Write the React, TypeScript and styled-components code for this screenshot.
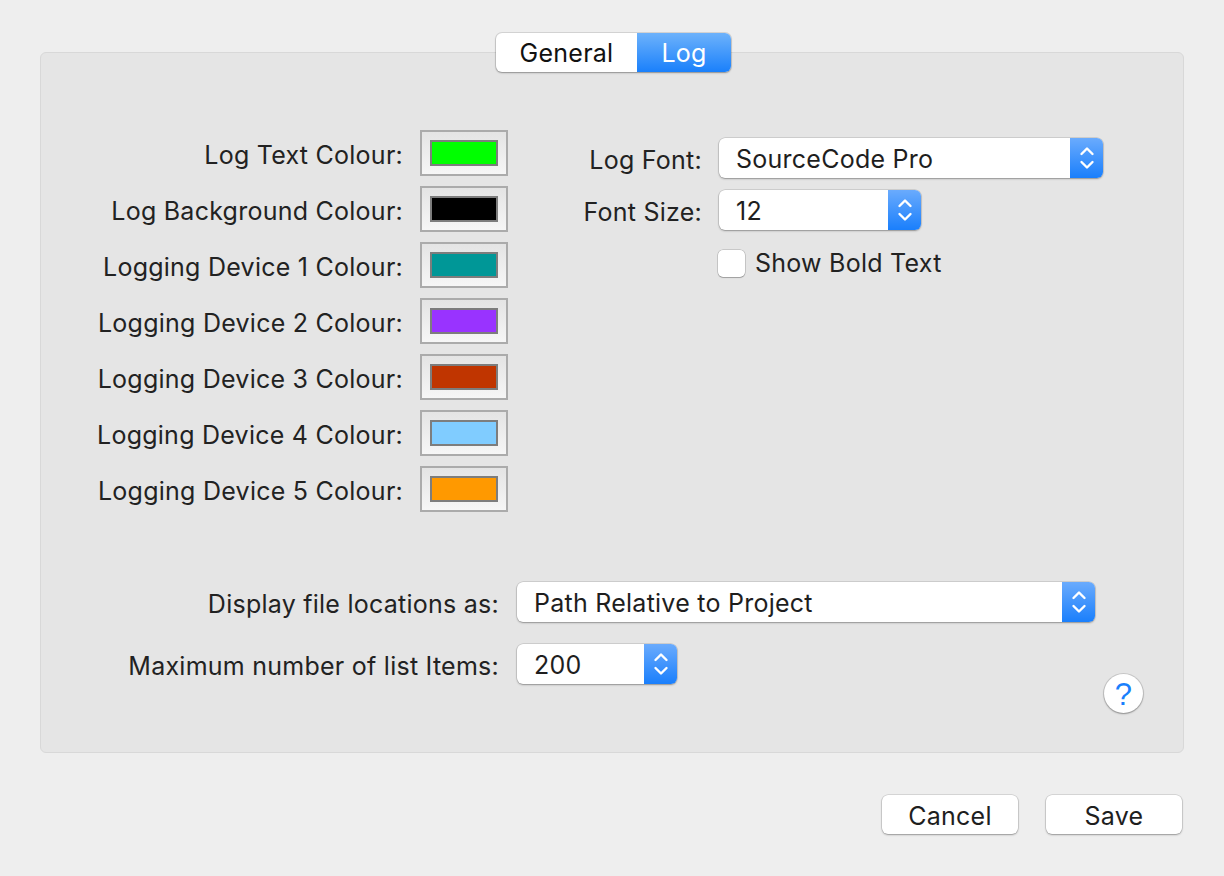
import React from "react";
import styled, { createGlobalStyle } from "styled-components";

const Global = createGlobalStyle`
  html, body { margin: 0; padding: 0; background: #eeeeee; }
  body { font-family: Inter, "Liberation Sans", Arial, sans-serif; color: #222; letter-spacing: 0.25px; }
`;

const Window = styled.div`
  width: 1224px;
  height: 876px;
  box-sizing: border-box;
  padding: 33px 40px 0 40px;
  display: flex;
  flex-direction: column;
  background: #eeeeee;
`;

const TabBar = styled.div`
  align-self: center;
  display: flex;
  height: 39px;
  margin-left: 3px;
  margin-bottom: -20px;
  position: relative;
  z-index: 1;
  border-radius: 6px;
  background: #fff;
  box-shadow: 0 0 0 1px rgba(0, 0, 0, 0.1), 0 1px 2px rgba(0, 0, 0, 0.3);
`;

const Tab = styled.div<{ $active?: boolean; $w: number }>`
  width: ${(p) => p.$w}px;
  display: flex;
  align-items: center;
  justify-content: center;
  font-size: 25px;
  padding-top: 1px;
  color: ${(p) => (p.$active ? "#fff" : "#111")};
  background: ${(p) => (p.$active ? "linear-gradient(#6db2fb, #1a80fb)" : "transparent")};
  border-radius: ${(p) => (p.$active ? "0 6px 6px 0" : "6px 0 0 6px")};
`;

const Panel = styled.div`
  height: 701px;
  box-sizing: border-box;
  background: #e5e5e5;
  border: 1px solid #d8d8d8;
  border-radius: 6px;
  padding: 77px 0 0 19px;
  display: flex;
  flex-direction: column;
`;

const TopSection = styled.div`
  display: flex;
  align-items: flex-start;
`;

const ColourGrid = styled.div`
  display: grid;
  grid-template-columns: 343px 88px;
  column-gap: 17px;
  row-gap: 10px;
  align-items: center;
`;

const Label = styled.div`
  text-align: right;
  font-size: 25px;
  padding-top: 3px;
  white-space: nowrap;
  color: #222;
`;

const Well = styled.div`
  width: 88px;
  height: 46px;
  box-sizing: border-box;
  border: 2px solid #ababab;
  background: linear-gradient(#e4e4e4, #f6f6f6);
  display: flex;
  align-items: center;
  justify-content: center;
`;

const Swatch = styled.div<{ $c: string }>`
  width: 68px;
  height: 26px;
  box-sizing: border-box;
  border: 2px solid #7d7d7d;
  background: ${(p) => p.$c};
`;

const FontGrid = styled.div`
  margin-top: 8px;
  margin-left: 32px;
  display: grid;
  grid-template-columns: 162px auto;
  column-gap: 17px;
  row-gap: 12px;
  align-items: center;
  justify-items: start;
`;

const RightLabel = styled(Label)`
  justify-self: end;
`;

const Popup = styled.div<{ $w: number }>`
  width: ${(p) => p.$w}px;
  height: 40px;
  box-sizing: border-box;
  display: flex;
  align-items: stretch;
  background: #fff;
  border-radius: 6px;
  box-shadow: 0 0 0 0.5px rgba(0, 0, 0, 0.18), 0 1px 2px rgba(0, 0, 0, 0.3);
  overflow: hidden;
`;

const PopupText = styled.div`
  flex: 1;
  display: flex;
  align-items: center;
  padding-left: 17px;
  padding-top: 2px;
  font-size: 25px;
  color: #1e1e1e;
`;

const Stepper = styled.div`
  width: 33px;
  background: linear-gradient(#6aabfd, #1a7ffc);
  display: flex;
  align-items: center;
  justify-content: center;
`;

const CheckRow = styled.div`
  grid-column: 2;
  margin-top: 6px;
  display: flex;
  align-items: center;
  gap: 10px;
  margin-left: -1px;
`;

const Checkbox = styled.div`
  width: 27px;
  height: 27px;
  box-sizing: border-box;
  background: #fff;
  border-radius: 5px;
  box-shadow: 0 0 0 0.5px rgba(0, 0, 0, 0.25), 0 1px 1px rgba(0, 0, 0, 0.2);
`;

const CheckLabel = styled.div`
  font-size: 25px;
  color: #222;
`;

const BottomSection = styled.div`
  margin-top: 70px;
  display: flex;
  align-items: flex-end;
`;

const LocationGrid = styled.div`
  display: grid;
  grid-template-columns: 439px auto;
  column-gap: 18px;
  row-gap: 22px;
  align-items: center;
  justify-items: start;
  margin-bottom: 29px;
`;

const HelpButton = styled.div`
  margin-left: auto;
  margin-right: 40px;
  width: 39px;
  height: 39px;
  border-radius: 50%;
  background: #fff;
  box-shadow: 0 0 0 1px rgba(0, 0, 0, 0.12), 0 1px 2px rgba(0, 0, 0, 0.3);
  display: flex;
  align-items: center;
  justify-content: center;
  color: #1a7ffc;
  font-size: 31px;
  padding-top: 2px;
  box-sizing: border-box;
  font-family: "Liberation Sans", Arial, sans-serif;
`;

const Footer = styled.div`
  margin-top: 42px;
  display: flex;
  justify-content: flex-end;
  gap: 28px;
  padding-right: 2px;
`;

const Button = styled.div`
  width: 136px;
  height: 39px;
  box-sizing: border-box;
  padding-top: 2px;
  background: #fff;
  border-radius: 6px;
  box-shadow: 0 0 0 0.5px rgba(0, 0, 0, 0.18), 0 1px 2px rgba(0, 0, 0, 0.3);
  display: flex;
  align-items: center;
  justify-content: center;
  font-size: 25px;
  color: #1e1e1e;
`;

const Chevrons = () => (
  <svg width="16" height="26" viewBox="0 0 16 26" fill="none">
    <path d="M2.5 9 L8 3.5 L13.5 9" stroke="#fff" strokeWidth="2.4" strokeLinecap="round" strokeLinejoin="round" />
    <path d="M2.5 17 L8 22.5 L13.5 17" stroke="#fff" strokeWidth="2.4" strokeLinecap="round" strokeLinejoin="round" />
  </svg>
);

const colours: [string, string][] = [
  ["Log Text Colour:", "#00ff00"],
  ["Log Background Colour:", "#000000"],
  ["Logging Device 1 Colour:", "#009797"],
  ["Logging Device 2 Colour:", "#9933ff"],
  ["Logging Device 3 Colour:", "#c03500"],
  ["Logging Device 4 Colour:", "#80ccff"],
  ["Logging Device 5 Colour:", "#ff9900"],
];

const PopupButton = ({ w, text }: { w: number; text: string }) => (
  <Popup $w={w}>
    <PopupText>{text}</PopupText>
    <Stepper>
      <Chevrons />
    </Stepper>
  </Popup>
);

export default function App() {
  return (
    <>
      <Global />
      <Window>
        <TabBar>
          <Tab $w={141}>General</Tab>
          <Tab $w={94} $active>
            Log
          </Tab>
        </TabBar>
        <Panel>
          <TopSection>
            <ColourGrid>
              {colours.map(([label, c]) => (
                <React.Fragment key={label}>
                  <Label>{label}</Label>
                  <Well>
                    <Swatch $c={c} />
                  </Well>
                </React.Fragment>
              ))}
            </ColourGrid>
            <FontGrid>
              <RightLabel>Log Font:</RightLabel>
              <PopupButton w={384} text="SourceCode Pro" />
              <RightLabel>Font Size:</RightLabel>
              <PopupButton w={202} text="12" />
              <CheckRow>
                <Checkbox />
                <CheckLabel>Show Bold Text</CheckLabel>
              </CheckRow>
            </FontGrid>
          </TopSection>
          <BottomSection>
            <LocationGrid>
              <RightLabel>Display file locations as:</RightLabel>
              <PopupButton w={578} text="Path Relative to Project" />
              <RightLabel>Maximum number of list Items:</RightLabel>
              <PopupButton w={160} text="200" />
            </LocationGrid>
            <HelpButton>?</HelpButton>
          </BottomSection>
        </Panel>
        <Footer>
          <Button>Cancel</Button>
          <Button>Save</Button>
        </Footer>
      </Window>
    </>
  );
}
